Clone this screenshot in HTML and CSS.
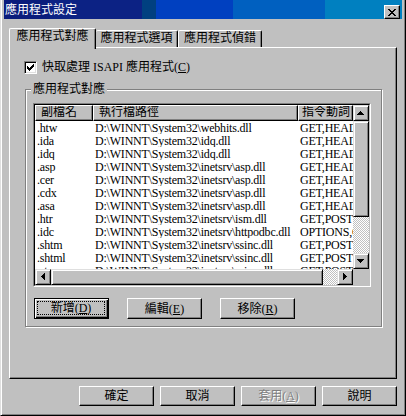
FILE: index.html
```html
<!DOCTYPE html>
<html>
	<head>
		<meta charset="utf-8" />
		<title>應用程式設定</title>
		<link rel="stylesheet" href="styles.css">
	</head>
	<body>
		<div class="window">
			<div class="titlebar">
				<span class="title">應用程式設定</span>
				<div class="close-btn">
					<svg width="8" height="7" viewBox="0 0 8 7" shape-rendering="crispEdges"><path d="M0 0h2v1h1v1h2V1h1V0h2v1H7v1H6v1H5v1h1v1h1v1h1v1H6V6H5V5H3v1H2v1H0V6h1V5h1V4h1V3H2V2H1V1H0z" fill="#000"/></svg>
				</div>
			</div>

			<div class="tabs">
				<div class="tab tab-active">應用程式對應</div>
				<div class="tab tab-2">應用程式選項</div>
				<div class="tab tab-3">應用程式偵錯</div>
			</div>

			<div class="panel">
				<div class="check-row">
					<span class="checkbox">
						<svg width="7" height="7" viewBox="0 0 7 7" shape-rendering="crispEdges"><path d="M6 0h1v1H6z M5 1h2v1H5z M0 2h1v1H0z M4 2h3v1H4z M0 3h2v1H0z M3 3h3v1H3z M0 4h5v1H0z M1 5h3v1H1z M2 6h1v1H2z" fill="#000"/></svg>
					</span>
					<span class="check-label">快取處理 ISAPI 應用程式(<u>C</u>)</span>
				</div>

				<div class="groupbox">
					<span class="groupbox-label">應用程式對應</span>
					<div class="listview">
						<div class="listview-inner">
							<div class="lv-content">
								<div class="lv-header">
									<div class="lv-head-cell">副檔名</div>
									<div class="lv-head-cell">執行檔路徑</div>
									<div class="lv-head-cell lv-head-last">指令動詞</div>
								</div>
								<div class="lv-row"><span>.htw</span><span>D:\WINNT\System32\webhits.dll</span><span>GET,HEAD,POST</span></div>
								<div class="lv-row"><span>.ida</span><span>D:\WINNT\System32\idq.dll</span><span>GET,HEAD,POST</span></div>
								<div class="lv-row"><span>.idq</span><span>D:\WINNT\System32\idq.dll</span><span>GET,HEAD,POST</span></div>
								<div class="lv-row"><span>.asp</span><span>D:\WINNT\System32\inetsrv\asp.dll</span><span>GET,HEAD,POST,TRACE</span></div>
								<div class="lv-row"><span>.cer</span><span>D:\WINNT\System32\inetsrv\asp.dll</span><span>GET,HEAD,POST,TRACE</span></div>
								<div class="lv-row"><span>.cdx</span><span>D:\WINNT\System32\inetsrv\asp.dll</span><span>GET,HEAD,POST,TRACE</span></div>
								<div class="lv-row"><span>.asa</span><span>D:\WINNT\System32\inetsrv\asp.dll</span><span>GET,HEAD,POST,TRACE</span></div>
								<div class="lv-row"><span>.htr</span><span>D:\WINNT\System32\inetsrv\ism.dll</span><span>GET,POST</span></div>
								<div class="lv-row"><span>.idc</span><span>D:\WINNT\System32\inetsrv\httpodbc.dll</span><span>OPTIONS,GET,HEAD,POST</span></div>
								<div class="lv-row"><span>.shtm</span><span>D:\WINNT\System32\inetsrv\ssinc.dll</span><span>GET,POST</span></div>
								<div class="lv-row"><span>.shtml</span><span>D:\WINNT\System32\inetsrv\ssinc.dll</span><span>GET,POST</span></div>
								<div class="lv-row"><span>.stm</span><span>D:\WINNT\System32\inetsrv\ssinc.dll</span><span>GET,POST</span></div>
							</div>

							<div class="vscroll">
								<div class="sb-btn">
									<svg width="8" height="4" viewBox="0 0 8 4" shape-rendering="crispEdges"><path d="M3 0h1v1h1v1h1v1h1v1H0V3h1V2h1V1h1z" fill="#000"/></svg>
								</div>
								<div class="sb-thumb sb-thumb-v"></div>
								<div class="sb-track"></div>
								<div class="sb-btn">
									<svg width="8" height="4" viewBox="0 0 8 4" shape-rendering="crispEdges"><path d="M0 0h7v1H6v1H5v1H4v1H3V3H2V2H1V1H0z" fill="#000"/></svg>
								</div>
							</div>

							<div class="hscroll">
								<div class="sb-btn">
									<svg width="4" height="8" viewBox="0 0 4 8" shape-rendering="crispEdges"><path d="M0 3h1V2h1V1h1V0h1v7H3V6H2V5H1V4H0z" fill="#000"/></svg>
								</div>
								<div class="sb-thumb sb-thumb-h"></div>
								<div class="sb-track"></div>
								<div class="sb-btn">
									<svg width="4" height="8" viewBox="0 0 4 8" shape-rendering="crispEdges"><path d="M0 0h1v1h1v1h1v1h1v1H3v1H2v1H1v1H0z" fill="#000"/></svg>
								</div>
							</div>

							<div class="corner"></div>
						</div>
					</div>

					<div class="group-buttons">
						<div class="btn btn-default"><span class="btn-focus">新增(<u>D</u>)</span></div>
						<div class="btn">編輯(<u>E</u>)</div>
						<div class="btn">移除(<u>R</u>)</div>
					</div>
				</div>
			</div>

			<div class="dialog-buttons">
				<div class="btn btn-dialog">確定</div>
				<div class="btn btn-dialog">取消</div>
				<div class="btn btn-dialog btn-disabled">套用(<u>A</u>)</div>
				<div class="btn btn-dialog">說明</div>
			</div>
		</div>
	</body>
</html>
```

FILE: styles.css
```css
* {
	box-sizing: border-box;
}

body {
	margin: 0;
	font-family: "Liberation Serif", "Noto Sans CJK TC", serif;
	font-size: 12px;
	color: #000;
	background: #c0c0c0;
}

.window {
	width: 406px;
	height: 416px;
	background: #c0c0c0;
	border-left: 1px solid #dfdfdf;
	border-right: 1px solid #000;
	border-bottom: 1px solid #000;
	box-shadow: inset 1px 0 #fff, inset -1px -1px #808080;
	padding: 0 3px 3px 3px;
	display: flex;
	flex-direction: column;
}

/* title bar */
.titlebar {
	height: 19px;
	display: flex;
	justify-content: space-between;
	align-items: flex-end;
	padding: 0 2px 0 1px;
	color: #fff;
	background: linear-gradient(to right,
		#0a1c7c 0 46px,
		#0c2284 46px 138px,
		#004080 138px 152px,
		#0040c0 152px 229px,
		#0060c0 229px 321px,
		#0080c0 321px);
}

.title {
	align-self: stretch;
	line-height: 17px;
	padding-top: 2px;
}

.close-btn {
	width: 16px;
	height: 14px;
	background: #c0c0c0;
	border: 1px solid;
	border-color: #fff #000 #000 #fff;
	box-shadow: inset -1px -1px #808080;
	display: flex;
	align-items: center;
	justify-content: center;
}

/* tabs */
.tabs {
	display: flex;
	align-items: flex-end;
	height: 19px;
	margin: 9px 5px 0 5px;
}

.tab {
	height: 17px;
	line-height: 14px;
	text-align: center;
	background: #c0c0c0;
	border-top: 1px solid #fff;
	border-left: 1px solid #fff;
	border-right: 1px solid #000;
	border-radius: 2px 2px 0 0;
	box-shadow: inset -1px 0 #808080;
}

.tab-active {
	width: 87px;
	height: 21px;
	margin-bottom: -2px;
	position: relative;
	z-index: 1;
}

.tab-2 {
	width: 82px;
	border-left: 0;
}

.tab-3 {
	width: 84px;
}

/* tab page */
.panel {
	height: 332px;
	margin: 0 5px;
	border: 1px solid;
	border-color: #fff #000 #000 #fff;
	box-shadow: inset -1px -1px #808080;
	display: flex;
	flex-direction: column;
}

.check-row {
	display: flex;
	align-items: center;
	gap: 5px;
	height: 13px;
	margin: 13px 0 0 14px;
}

.checkbox {
	width: 13px;
	height: 13px;
	background: #fff;
	border: 1px solid;
	border-color: #808080 #fff #fff #808080;
	box-shadow: inset 1px 1px #000, inset -1px -1px #dfdfdf;
	display: flex;
	align-items: center;
	justify-content: center;
}

.check-label {
	line-height: 13px;
	white-space: nowrap;
}

.groupbox {
	position: relative;
	width: 357px;
	height: 238px;
	margin: 15px 0 0 15px;
	padding: 13px 0 0 7px;
	border: 1px solid #808080;
	box-shadow: inset 1px 1px #fff, 1px 1px #fff;
}

.groupbox-label {
	position: absolute;
	top: -8px;
	left: 5px;
	padding: 0 2px;
	line-height: 14px;
	background: #c0c0c0;
}

/* list view */
.listview {
	width: 338px;
	height: 184px;
	border: 1px solid;
	border-color: #808080 #fff #fff #808080;
}

.listview-inner {
	height: 100%;
	background: #fff;
	border: 1px solid;
	border-color: #000 #c0c0c0 #c0c0c0 #000;
	display: grid;
	grid-template-columns: 1fr 16px;
	grid-template-rows: 1fr 16px;
}

.lv-content {
	overflow: hidden;
	min-width: 0;
	min-height: 0;
}

.lv-header,
.lv-row {
	display: grid;
	grid-template-columns: 58px 205px 1fr;
}

.lv-head-cell {
	height: 16px;
	line-height: 13px;
	padding-left: 5px;
	white-space: nowrap;
	overflow: hidden;
	background: #c0c0c0;
	border: 1px solid;
	border-color: #fff #000 #000 #fff;
	box-shadow: inset -1px -1px #808080;
}

.lv-head-last {
	padding-left: 3px;
}

.lv-row span {
	height: 13px;
	line-height: 11px;
	padding: 2px 0 0 2px;
	letter-spacing: -0.2px;
	white-space: nowrap;
	overflow: hidden;
}

/* scroll bars */
.vscroll {
	display: flex;
	flex-direction: column;
}

.hscroll {
	display: flex;
}

.sb-btn,
.sb-thumb {
	background: #c0c0c0;
	border: 1px solid;
	border-color: #dfdfdf #000 #000 #dfdfdf;
	box-shadow: inset 1px 1px #fff, inset -1px -1px #808080;
}

.sb-btn {
	width: 16px;
	height: 16px;
	flex: none;
	display: flex;
	align-items: center;
	justify-content: center;
}

.sb-thumb-v {
	height: 96px;
}

.sb-thumb-h {
	width: 272px;
}

.sb-track {
	flex: 1;
	background: repeating-conic-gradient(#fff 0 25%, #c0c0c0 0 50%) 0 0 / 2px 2px;
}

.corner {
	background: #c0c0c0;
}

/* buttons */
.group-buttons {
	display: flex;
	gap: 18px;
	margin: 11px 0 0 1px;
}

.btn {
	width: 75px;
	height: 21px;
	line-height: 14px;
	background: #c0c0c0;
	border: 1px solid;
	border-color: #fff #000 #000 #fff;
	box-shadow: inset -1px -1px #808080;
	display: flex;
	align-items: center;
	justify-content: center;
	white-space: nowrap;
}

.btn-default {
	border-color: #000;
	box-shadow: inset 1px 1px #fff, inset -1px -1px #000, inset -2px -2px #808080;
}

.btn-focus {
	align-self: stretch;
	flex: 1;
	margin: 2px 3px 3px 2px;
	border: 1px dotted #000;
	display: flex;
	align-items: center;
	justify-content: center;
}

.dialog-buttons {
	display: flex;
	justify-content: flex-end;
	gap: 6px;
	margin: 7px 5px 0 0;
}

.btn-dialog {
	height: 20px;
}

.btn-disabled {
	color: #808080;
	text-shadow: 1px 1px #fff;
}
```
